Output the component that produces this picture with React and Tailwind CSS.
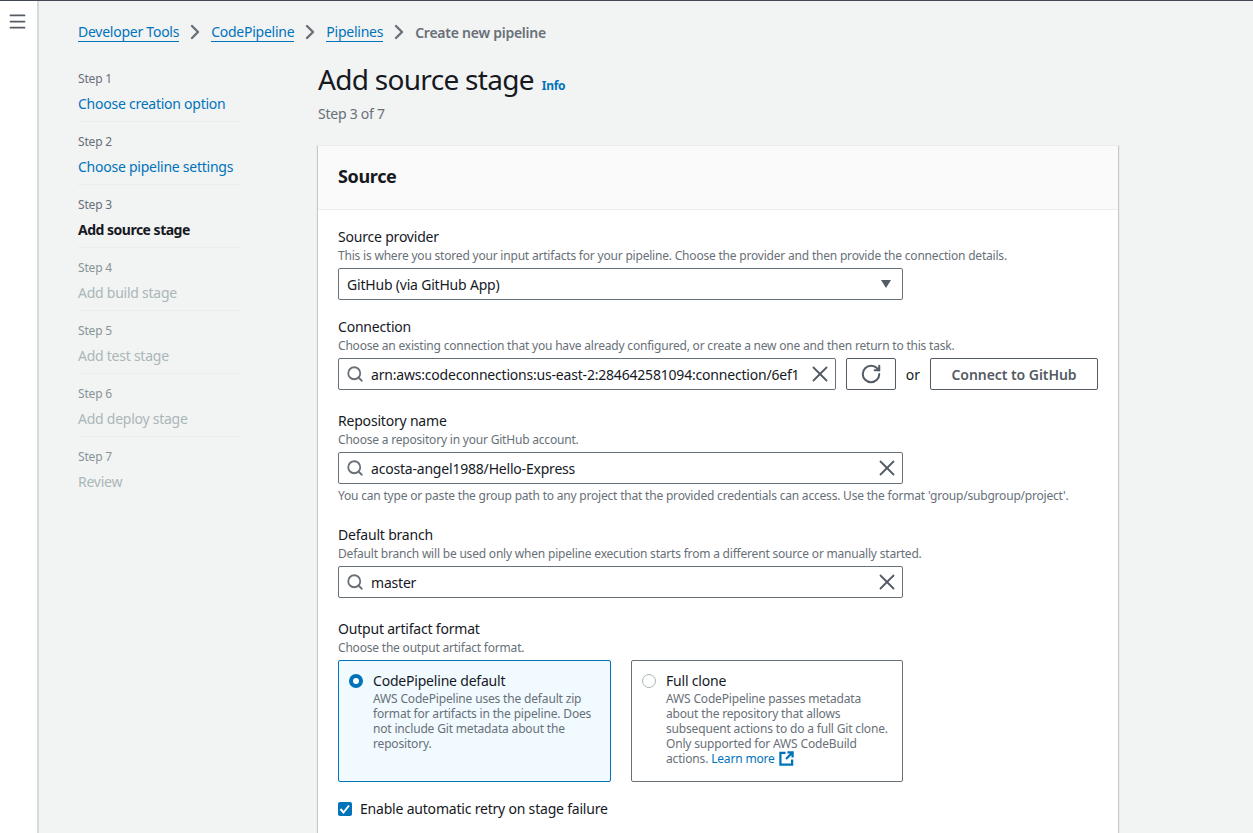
import React from "react";
import { Menu, ChevronRight, Search, X, RotateCw } from "lucide-react";

const STEPS = [
  { label: "Step 1", title: "Choose creation option", state: "done" },
  { label: "Step 2", title: "Choose pipeline settings", state: "done" },
  { label: "Step 3", title: "Add source stage", state: "active" },
  { label: "Step 4", title: "Add build stage", state: "todo" },
  { label: "Step 5", title: "Add test stage", state: "todo" },
  { label: "Step 6", title: "Add deploy stage", state: "todo" },
  { label: "Step 7", title: "Review", state: "todo", last: true },
];

const Crumb = ({ children }) => (
  <a className="text-[14px] leading-[18px] tracking-[-0.25px] text-[#0073bb] border-b border-[#0073bb]">{children}</a>
);

const Sep = () => <ChevronRight size={24} strokeWidth={2.4} className="text-[#687078] mx-[4px]" />;

const Field = ({ label, hint, children, footer, gap = "mb-[22px]" }) => (
  <div className={gap}>
    <div className="text-[14px] leading-[18px] tracking-[-0.2px] text-[#16191f] mb-[2px]">{label}</div>
    <div className="text-[12px] leading-[16px] tracking-[-0.2px] text-[#687078] mb-[4px]">{hint}</div>
    {children}
    {footer && <div className="text-[12px] leading-[16px] tracking-[-0.2px] text-[#687078] mt-[4px]">{footer}</div>}
  </div>
);

const SearchInput = ({ value, className }) => (
  <div className={`h-[32px] flex items-center border border-[#687078] rounded-[2px] bg-white pl-[7px] pr-[2px] ${className}`}>
    <Search size={18} strokeWidth={2.4} className="text-[#687078] shrink-0" />
    <span className="ml-[7px] flex-1 text-[14px] tracking-[-0.2px] text-[#16191f] whitespace-nowrap">{value}</span>
    <X size={26} strokeWidth={1.7} className="text-[#545b64] shrink-0" />
  </div>
);

const App = () => {
  return (
    <div className="h-[833px] overflow-hidden flex bg-[#f2f3f3] border-t border-[#414750] font-['Noto_Sans',sans-serif]">
      {/* Side rail */}
      <div className="w-[39px] shrink-0 bg-white border-r-[2px] border-[#d5dbdb] pt-[10px] pl-[7px]">
        <Menu size={21} strokeWidth={2} className="text-[#545b64]" />
      </div>

      <div className="flex-1 pl-[39px] pt-[21px]">
        {/* Breadcrumbs */}
        <div className="flex items-center h-[20px]">
          <Crumb>Developer Tools</Crumb>
          <Sep />
          <Crumb>CodePipeline</Crumb>
          <Sep />
          <Crumb>Pipelines</Crumb>
          <Sep />
          <span className="text-[14px] font-semibold tracking-[-0.25px] text-[#687078]">Create new pipeline</span>
        </div>

        <div className="flex mt-[19px]">
          {/* Wizard steps */}
          <div className="w-[162px] shrink-0 mr-[78px] pt-[10px]">
            {STEPS.map((s) => (
              <div key={s.label} className={s.last ? "" : "h-[63px]"}>
                <div className={`text-[12px] leading-[16px] tracking-[-0.17px] ${s.state === "todo" ? "text-[#879596]" : "text-[#687078]"}`}>{s.label}</div>
                <div
                  className={`mt-[7px] text-[14px] leading-[20px] pb-[7px] ${s.last ? "" : "border-b border-[#eaeded]"} ${
                    s.state === "done"
                      ? "text-[#0073bb] tracking-[-0.25px]"
                      : s.state === "active"
                      ? "text-[#16191f] font-bold tracking-[-0.5px]"
                      : "text-[#aab7b8] tracking-[-0.25px]"
                  }`}
                >
                  {s.title}
                </div>
              </div>
            ))}
          </div>

          {/* Main column */}
          <div className="w-[800px] shrink-0">
            <div className="flex items-baseline">
              <h1 className="text-[28px] leading-[36px] tracking-[-0.7px] text-[#16191f]">Add source stage</h1>
              <a className="ml-[8px] text-[12px] font-bold tracking-[-0.3px] text-[#0073bb]">Info</a>
            </div>
            <div className="text-[14px] leading-[20px] tracking-[-0.25px] text-[#687078] mt-[7px]">Step 3 of 7</div>

            {/* Source card */}
            <div className="mt-[21px] bg-white shadow-[0_1px_1px_0_rgba(0,28,36,0.3),1px_1px_1px_0_rgba(0,28,36,0.15),-1px_1px_1px_0_rgba(0,28,36,0.15)] border-t border-[#eaeded]">
              <div className="h-[64px] bg-[#fafafa] border-b border-[#eaeded] flex items-center px-[20px] pb-[3px]">
                <h2 className="text-[18px] font-bold tracking-[-0.35px] text-[#16191f]">Source</h2>
              </div>

              <div className="px-[20px] pt-[18px] pb-[40px]">
                <Field gap="mb-[18px]" label="Source provider" hint="This is where you stored your input artifacts for your pipeline. Choose the provider and then provide the connection details.">
                  <div className="w-[565px] h-[32px] flex items-center justify-between border border-[#687078] rounded-[2px] bg-white pl-[8px] pr-[11px]">
                    <span className="text-[14px] tracking-[-0.2px] text-[#16191f]">GitHub (via GitHub App)</span>
                    <span className="w-0 h-0 border-l-[5.5px] border-r-[5.5px] border-t-[8px] border-l-transparent border-r-transparent border-t-[#545b64]" />
                  </div>
                </Field>

                <Field label="Connection" hint="Choose an existing connection that you have already configured, or create a new one and then return to this task.">
                  <div className="flex items-center">
                    <SearchInput className="w-[498px]" value="arn:aws:codeconnections:us-east-2:284642581094:connection/6ef1" />
                    <button className="ml-[10px] w-[50px] h-[32px] flex items-center justify-center border border-[#545b64] rounded-[2px] bg-white">
                      <RotateCw size={22} strokeWidth={2.2} className="text-[#545b64]" />
                    </button>
                    <span className="w-[34px] text-center text-[14px] text-[#16191f]">or</span>
                    <button className="w-[168px] h-[32px] border border-[#545b64] rounded-[2px] bg-white text-[14px] font-semibold tracking-[-0.05px] text-[#545b64]">
                      Connect to GitHub
                    </button>
                  </div>
                </Field>

                <Field
                  label="Repository name"
                  hint="Choose a repository in your GitHub account."
                  footer="You can type or paste the group path to any project that the provided credentials can access. Use the format 'group/subgroup/project'."
                >
                  <SearchInput className="w-[565px]" value="acosta-angel1988/Hello-Express" />
                </Field>

                <Field label="Default branch" hint="Default branch will be used only when pipeline execution starts from a different source or manually started.">
                  <SearchInput className="w-[565px]" value="master" />
                </Field>

                <div className="text-[14px] leading-[18px] tracking-[-0.2px] text-[#16191f] mb-[2px]">Output artifact format</div>
                <div className="text-[12px] leading-[16px] tracking-[-0.2px] text-[#687078] mb-[4px]">Choose the output artifact format.</div>

                <div className="flex gap-[20px] w-[565px]">
                  <div className="w-[273px] h-[122px] border border-[#0073bb] rounded-[2px] bg-[#f1faff] pt-[10px] pl-[10px] pr-[10px] flex">
                    <span className="mt-[3px] w-[14px] h-[14px] rounded-full border-[4px] border-[#0073bb] bg-white shrink-0" />
                    <div className="ml-[10px]">
                      <div className="text-[14px] leading-[20px] tracking-[-0.2px] text-[#16191f]">CodePipeline default</div>
                      <div className="text-[12px] leading-[15px] tracking-[-0.17px] text-[#687078]">
                        AWS CodePipeline uses the default zip format for artifacts in the pipeline. Does not include Git metadata about the repository.
                      </div>
                    </div>
                  </div>
                  <div className="w-[272px] h-[122px] border border-[#687078] rounded-[2px] bg-white pt-[10px] pl-[10px] pr-[10px] flex">
                    <span className="mt-[3px] w-[14px] h-[14px] rounded-full border border-[#aab7b8] bg-white shrink-0" />
                    <div className="ml-[10px]">
                      <div className="text-[14px] leading-[20px] tracking-[-0.2px] text-[#16191f]">Full clone</div>
                      <div className="text-[12px] leading-[15px] tracking-[-0.17px] text-[#687078]">
                        AWS CodePipeline passes metadata about the repository that allows subsequent actions to do a full Git clone. Only supported for AWS CodeBuild actions.{" "}
                        <a className="text-[#0073bb]">Learn more</a>
                        <svg viewBox="0 0 16 16" className="inline-block w-[15px] h-[15px] ml-[4px] align-[-3px] text-[#0073bb]" fill="none" stroke="currentColor" strokeWidth="2.4">
                          <path d="M7 2H1.5v12.5H14V9" />
                          <path d="M9 1.5h5.5V7M14.5 1.5 7.5 8.5" />
                        </svg>
                      </div>
                    </div>
                  </div>
                </div>

                <div className="mt-[17px] flex items-center">
                  <span className="w-[14px] h-[14px] rounded-[2px] bg-[#0073bb] flex items-center justify-center">
                    <svg viewBox="0 0 14 14" className="w-[14px] h-[14px]" fill="none" stroke="white" strokeWidth="2">
                      <path d="M2.5 7 5.5 10.5 11 3.5" />
                    </svg>
                  </span>
                  <span className="ml-[8px] text-[14px] leading-[20px] tracking-[-0.2px] text-[#16191f]">Enable automatic retry on stage failure</span>
                </div>
              </div>
            </div>
          </div>
        </div>
      </div>
    </div>
  );
};

export default App;
